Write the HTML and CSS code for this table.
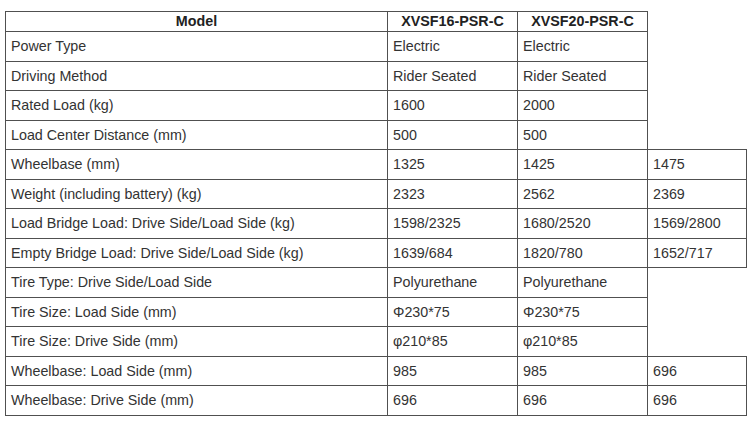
FILE: index.html
```html
<!DOCTYPE html>
<html>
<head>
<meta charset="utf-8">
<link rel="stylesheet" href="styles.css">
</head>
<body>
<table class="spec">
  <colgroup>
    <col class="c1"><col class="c2"><col class="c3"><col class="c4">
  </colgroup>
  <tr class="head"><th>Model</th><th>XVSF16-PSR-C</th><th>XVSF20-PSR-C</th></tr>
  <tr><td>Power Type</td><td>Electric</td><td>Electric</td></tr>
  <tr><td>Driving Method</td><td>Rider Seated</td><td>Rider Seated</td></tr>
  <tr><td>Rated Load (kg)</td><td>1600</td><td>2000</td></tr>
  <tr><td>Load Center Distance (mm)</td><td>500</td><td>500</td></tr>
  <tr><td>Wheelbase (mm)</td><td>1325</td><td>1425</td><td>1475</td></tr>
  <tr><td>Weight (including battery) (kg)</td><td>2323</td><td>2562</td><td>2369</td></tr>
  <tr><td>Load Bridge Load: Drive Side/Load Side (kg)</td><td>1598/2325</td><td>1680/2520</td><td>1569/2800</td></tr>
  <tr><td>Empty Bridge Load: Drive Side/Load Side (kg)</td><td>1639/684</td><td>1820/780</td><td>1652/717</td></tr>
  <tr><td>Tire Type: Drive Side/Load Side</td><td>Polyurethane</td><td>Polyurethane</td></tr>
  <tr><td>Tire Size: Load Side (mm)</td><td>Φ230*75</td><td>Φ230*75</td></tr>
  <tr><td>Tire Size: Drive Side (mm)</td><td>φ210*85</td><td>φ210*85</td></tr>
  <tr><td>Wheelbase: Load Side (mm)</td><td>985</td><td>985</td><td>696</td></tr>
  <tr><td>Wheelbase: Drive Side (mm)</td><td>696</td><td>696</td><td>696</td></tr>
</table>
</body>
</html>
```
FILE: styles.css
```css
html, body {
  margin: 0;
  padding: 0;
  background: #fff;
}
body {
  padding: 11px 0 0 5px;
  font-family: "Liberation Sans", Arial, sans-serif;
  font-size: 14.3px;
  color: #333;
}
.spec {
  border-collapse: collapse;
  table-layout: fixed;
  width: 741px;
}
.c1 { width: 382px; }
.c2 { width: 130px; }
.c3 { width: 130px; }
.c4 { width: 99px; }
.spec th, .spec td {
  border: 1px solid #505050;
  line-height: 16px;
  white-space: nowrap;
}
.spec th {
  font-weight: bold;
  text-align: center;
  padding: 1px 5px 2px;
  color: #222;
}
.spec td {
  text-align: left;
  padding: 6px 5px 7px;
  height: 16px;
}
.spec tr:nth-child(odd) td {
  padding-bottom: 6px;
}
```
